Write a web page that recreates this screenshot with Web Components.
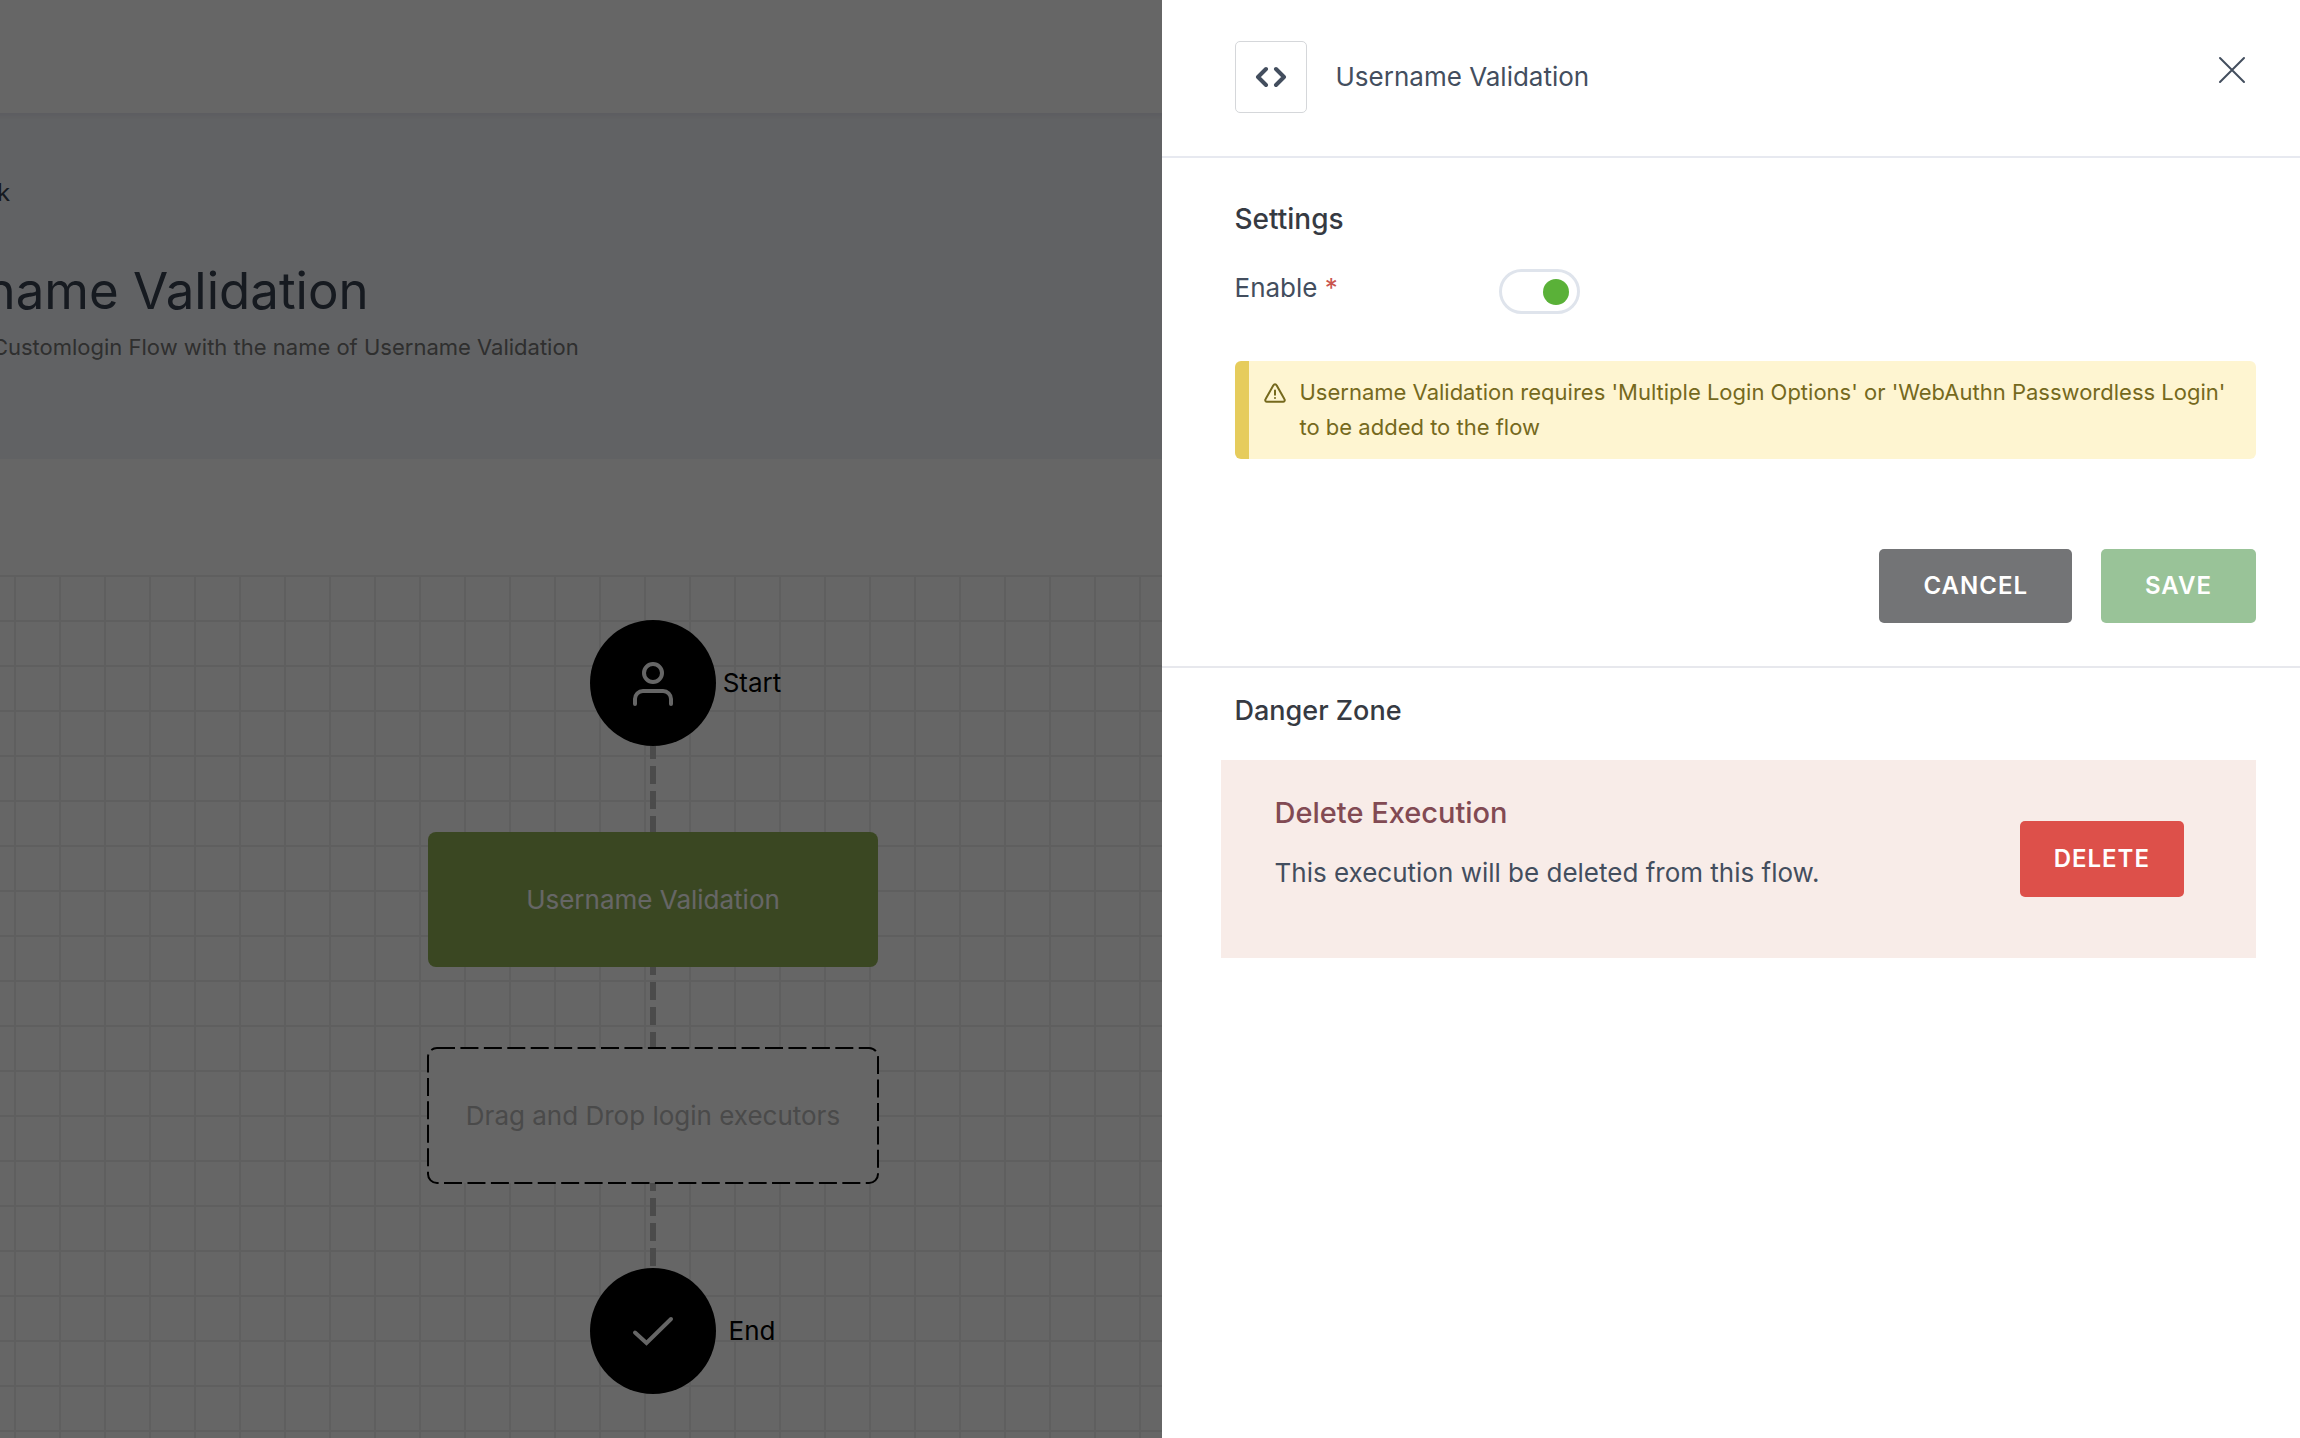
<!DOCTYPE html>
<html lang="en">
<head>
<meta charset="utf-8">
<title>Username Validation</title>
<style>
  html, body { height: 100%; }
  body { margin: 0; font-family: Inter, "Liberation Sans", sans-serif; font-size: 26px; color: #434e5e; background: #fff; overflow: hidden; }
</style>
</head>
<body>
<flow-app></flow-app>

<script>
const define = (name, html, setup) => {
  const template = document.createElement('template');
  template.innerHTML = html;
  customElements.define(name, class extends HTMLElement {
    constructor() {
      super();
      this.attachShadow({ mode: 'open' }).append(template.content.cloneNode(true));
    }
    connectedCallback() { if (setup) setup(this, this.shadowRoot); }
  });
};

/* Page heading band */
define('page-hero', `
<style>
  :host { display: flex; flex-direction: column; align-items: flex-start; box-sizing: border-box; min-height: 346px;
    padding: 62px 0 0; background: #f3f5f9; box-shadow: inset 0 5px 4px -2px #e6e6f0; white-space: nowrap; }
  a { display: flex; align-items: center; gap: 63px; color: #374151; text-decoration: none; font-size: 24px; line-height: 36px; }
  h1 { margin: 48px 0 0; font-size: 51px; line-height: 64px; font-weight: 400; color: #374151; }
  p { margin: 10px 0 0; font-size: 22px; line-height: 28px; color: #757575; }
</style>
<a href="#"><svg width="20" height="20" viewBox="0 0 20 20" fill="none" stroke="currentColor" stroke-width="2" aria-hidden="true"><path d="M13 3 6 10l7 7"/></svg><slot name="back"></slot></a>
<h1><slot name="title"></slot></h1>
<p><slot></slot></p>`);

/* Dashed link between two nodes */
define('flow-link', `
<style>
  :host { display: block; width: 6px; }
  svg { display: block; width: 6px; height: 100%; }
</style>
<svg aria-hidden="true"><line x1="3" y1="0" x2="3" y2="100%" stroke="#bbb" stroke-width="6" stroke-dasharray="18 7"/></svg>`,
(host, root) => {
  host.style.height = host.getAttribute('length') + 'px';
  root.querySelector('line').setAttribute('stroke-dashoffset', host.getAttribute('phase'));
});

/* Round start / end node with its label to the right */
define('flow-terminal', `
<style>
  :host { display: grid; grid-template-columns: 1fr auto 1fr; align-items: center; align-self: stretch; color: #000; }
  .disc { grid-column: 2; display: flex; align-items: center; justify-content: center; width: 126px; height: 126px; border-radius: 50%; background: #000; color: #fff; }
  .label { width: 72px; text-align: center; line-height: 36px; }
</style>
<div class="disc"><slot name="icon"></slot></div>
<div class="label"><slot></slot></div>`);

/* Rectangular node */
define('flow-step', `
<style>
  :host { display: flex; align-items: center; justify-content: center; position: relative; width: 450px; height: 135px; border-radius: 8px; background: #91b255; color: #fff; line-height: 36px; }
  svg { display: none; position: absolute; inset: 0; overflow: visible; }
  :host([empty]) { background: #fff; color: #b9b9b9; }
  :host([empty]) svg { display: block; }
</style>
<svg width="450" height="135" aria-hidden="true"><rect width="450" height="135" rx="9" fill="none" stroke="#000" stroke-width="2" stroke-dasharray="18 5.43"/></svg>
<slot></slot>`);

/* Gridded drawing area */
define('flow-canvas', `
<style>
  :host { display: flex; flex-direction: column; align-items: center; flex: 1; padding-top: 45px; margin-top: 116px;
    background-image: linear-gradient(#eee 2px, transparent 2px), linear-gradient(90deg, #eee 2px, transparent 2px);
    background-size: 45px 45px; background-position: 0 0, 8px 0; }
</style>
<slot></slot>`);

define('flow-page', `
<style>
  :host { display: block; height: 100%; }
  .sheet { display: flex; flex-direction: column; height: 100%; margin-left: -129px; width: 68%; background: #fff; }
  .bar { height: 113px; flex: none; }
  .shade { position: fixed; inset: 0; background: rgba(0, 0, 0, .6); }
</style>
<div class="sheet">
  <header class="bar"></header>
  <page-hero>
    <span slot="back">Back</span>
    <span slot="title">Username Validation</span>
    Update the Customlogin Flow with the name of Username Validation
  </page-hero>
  <flow-canvas>
    <flow-terminal>
      <svg slot="icon" width="42" height="46" viewBox="0 0 42 46" fill="none" stroke="currentColor" stroke-width="4" stroke-linecap="round" aria-hidden="true"><circle cx="21" cy="13" r="9"/><path d="M3 44v-5a8 8 0 0 1 8-8h20a8 8 0 0 1 8 8v5"/></svg>
      Start
    </flow-terminal>
    <flow-link length="86" phase="5"></flow-link>
    <flow-step>Username Validation</flow-step>
    <flow-link length="81" phase="10"></flow-link>
    <flow-step empty>Drag and Drop login executors</flow-step>
    <flow-link length="85" phase="10"></flow-link>
    <flow-terminal>
      <svg slot="icon" width="42" height="30" viewBox="0 0 42 30" fill="none" stroke="currentColor" stroke-width="4" stroke-linecap="round" aria-hidden="true"><path d="M3 16.500 14.500 27 39 3"/></svg>
      End
    </flow-terminal>
  </flow-canvas>
</div>
<div class="shade"></div>`);

/* Filled button: tone is neutral, success or danger */
define('action-button', `
<style>
  :host { display: block; }
  button { box-sizing: border-box; height: 74px; padding: 0 44px; border: 0; border-radius: 5px; background: #737476; color: #fff;
    font: 600 24px/36px Inter, "Liberation Sans", sans-serif; letter-spacing: 1px; text-transform: uppercase; }
  :host([tone=success]) button { background: #99c398; }
  :host([tone=danger]) button { height: 76px; padding: 0 34px; background: #dd504a; }
</style>
<button type="button"><slot></slot></button>`);

define('drawer-header', `
<style>
  :host { display: flex; align-items: flex-start; padding: 41px 44px 43px 73px; border-bottom: 2px solid #e7e9f0; }
  .tile { display: flex; align-items: center; justify-content: center; box-sizing: border-box; width: 72px; height: 72px; border: 1px solid #d5d7da; border-radius: 5px; }
  h2 { flex: 1; margin: 0 0 0 29px; font-size: 26px; line-height: 72px; font-weight: 400; }
  button { display: flex; padding: 10px; margin: 5px 0 0; border: 0; background: none; color: #434e5e; }
</style>
<div class="tile"><svg width="32" height="22" viewBox="0 0 32 22" fill="none" stroke="currentColor" stroke-width="4" stroke-linecap="round" stroke-linejoin="round" aria-hidden="true"><path d="M11 3 3 11l8 8M21 3l8 8-8 8"/></svg></div>
<h2><slot></slot></h2>
<button type="button" aria-label="Close"><svg width="28" height="28" viewBox="0 0 28 28" fill="none" stroke="currentColor" stroke-width="2" stroke-linecap="round" aria-hidden="true"><path d="M2 2l24 24M26 2 2 26"/></svg></button>`);

define('toggle-field', `
<style>
  :host { display: flex; align-items: flex-start; }
  label { width: 264px; line-height: 38px; }
  .req { color: #c9544d; }
  input { appearance: none; box-sizing: border-box; display: flex; align-items: center; justify-content: flex-end; width: 81px; height: 45px; margin: 0; padding: 0 8px;
    border: 3px solid #dfe4ec; border-radius: 23px; background: #fff; }
  input::before { content: ""; width: 26px; height: 26px; border-radius: 50%; background: #5ab138; }
  input:not(:checked) { justify-content: flex-start; }
</style>
<label for="toggle"><slot></slot> <span class="req">*</span></label>
<input id="toggle" type="checkbox" role="switch" checked required>`);

define('alert-note', `
<style>
  :host { display: flex; gap: 14px; box-sizing: border-box; min-height: 98px; padding: 14px 14px 14px 15px; border-left: 14px solid #e6cc5c; border-radius: 6px; background: #fef5d1; color: #75691d; }
  svg { flex: none; margin-top: 8px; }
  p { margin: 0; font-size: 22px; line-height: 35px; }
</style>
<svg width="22" height="20" viewBox="0 0 22 20" fill="none" stroke="currentColor" stroke-width="2" stroke-linecap="round" stroke-linejoin="round" aria-hidden="true"><path d="M9.400 2.200 1.500 16.200a1.700 1.700 0 0 0 1.500 2.600h16a1.700 1.700 0 0 0 1.500-2.600L12.600 2.200a1.800 1.800 0 0 0-3.200 0zM11 7.500v4.300M11 15v.1"/></svg>
<p role="alert"><slot></slot></p>`);

define('danger-panel', `
<style>
  :host { display: flex; align-items: flex-start; justify-content: space-between; box-sizing: border-box; min-height: 198px; padding: 34px 72px 0 54px; background: #f8ece8; }
  h4 { margin: 0; font-size: 29px; line-height: 38px; font-weight: 500; color: #824a53; }
  p { margin: 22px 0 0; line-height: 38px; }
  ::slotted(action-button) { margin-top: 27px; }
</style>
<div><h4><slot name="title"></slot></h4><p><slot></slot></p></div>
<slot name="action"></slot>`);

define('side-drawer', `
<style>
  :host { display: flex; flex-direction: column; position: fixed; top: 0; right: 0; bottom: 0; width: 49.5%; background: #fff; }
  section { padding: 42px 44px 43px 73px; }
  section + section { border-top: 2px solid #e7e8ed; padding-top: 24px; }
  h3 { margin: 0; font-size: 28px; line-height: 38px; font-weight: 500; color: #363a42; }
  section + section h3 { font-size: 27px; }
  toggle-field { margin-top: 31px; }
  alert-note { margin-top: 47px; }
  .actions { display: flex; justify-content: flex-end; gap: 29px; margin-top: 90px; }
  danger-panel { margin: 30px 0 0 -14px; }
</style>
<drawer-header>Username Validation</drawer-header>
<section>
  <h3>Settings</h3>
  <toggle-field>Enable</toggle-field>
  <alert-note>Username Validation requires 'Multiple Login Options' or 'WebAuthn Passwordless Login' to be added to the flow</alert-note>
  <div class="actions"><action-button>Cancel</action-button><action-button tone="success">Save</action-button></div>
</section>
<section>
  <h3>Danger Zone</h3>
  <danger-panel>
    <span slot="title">Delete Execution</span>
    This execution will be deleted from this flow.
    <action-button slot="action" tone="danger">Delete</action-button>
  </danger-panel>
</section>`);

define('flow-app', `
<style>:host { display: block; height: 100vh; overflow: hidden; }</style>
<flow-page></flow-page>
<side-drawer></side-drawer>`);
</script>
</body>
</html>
